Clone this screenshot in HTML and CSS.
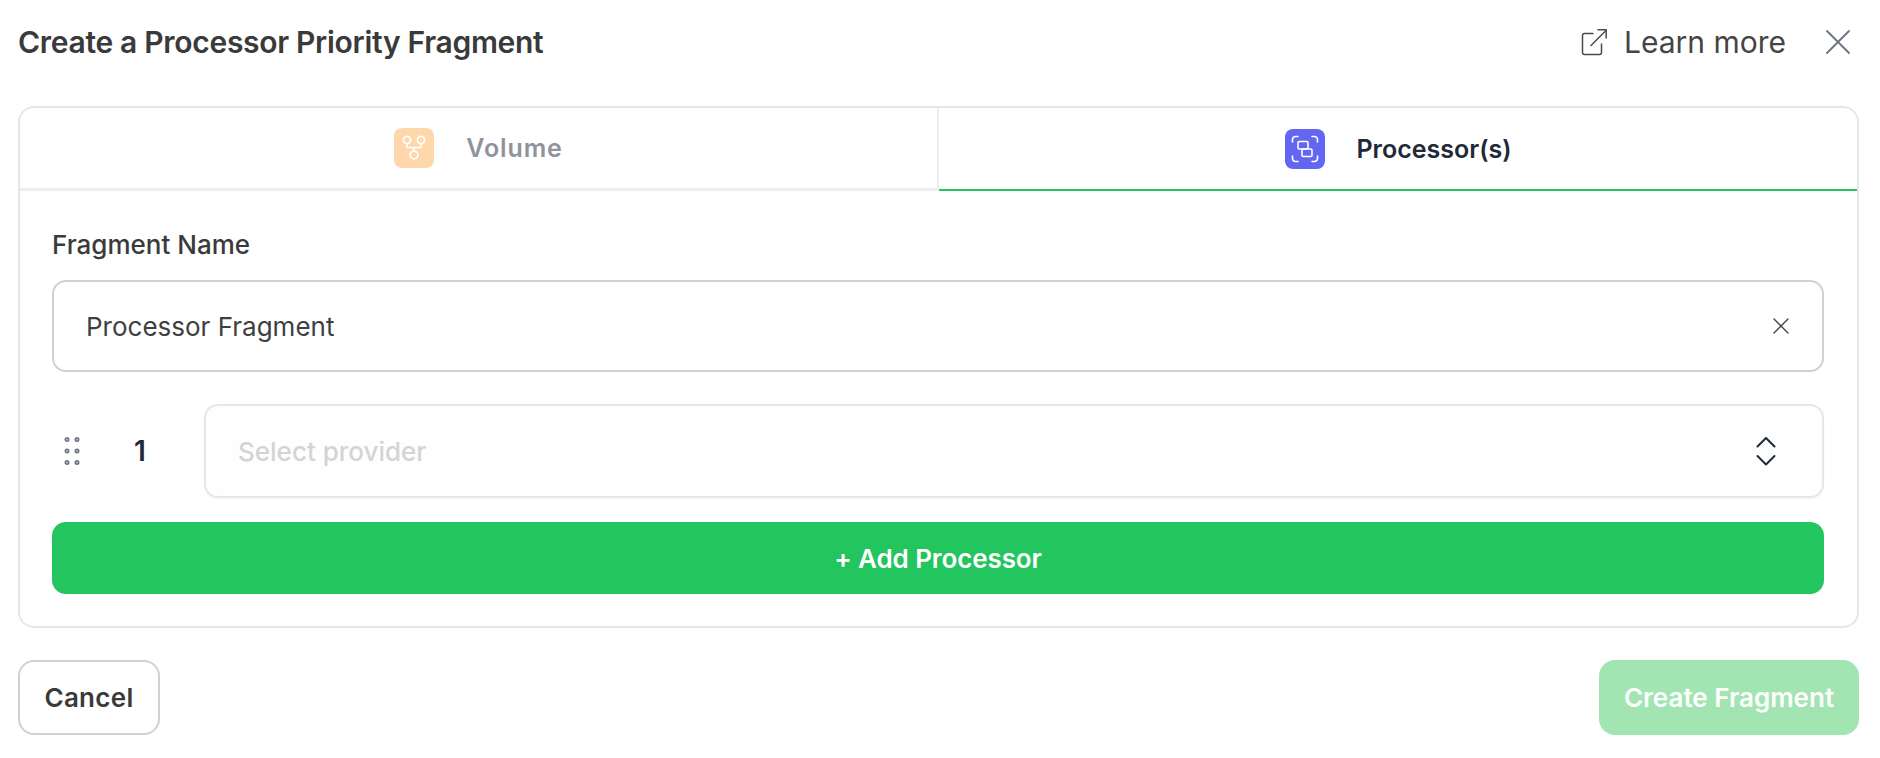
FILE: index.html
```html
<!DOCTYPE html>
<html lang="en">
<head>
<meta charset="utf-8">
<title>Create a Processor Priority Fragment</title>
<link rel="stylesheet" href="styles.css">
</head>
<body>
<div class="modal">
  <header class="head">
    <h1 class="title">Create a Processor Priority Fragment</h1>
    <a class="learn">
      <svg class="ext" width="28" height="28" viewBox="0 0 28 28" fill="none" stroke="#4b4b4b" stroke-width="1.5" stroke-linecap="round" stroke-linejoin="round"><path d="M13 5.5H4.5a2 2 0 0 0-2 2v17a2 2 0 0 0 2 2h15a2 2 0 0 0 2-2V16"/><path d="M11 17.5 26 2.5"/><path d="M18 1.8h8.2V10"/></svg>
      <span>Learn more</span>
    </a>
    <svg class="close" width="26" height="26" viewBox="0 0 26 26" fill="none" stroke="#6b7280" stroke-width="1.8" stroke-linecap="round"><path d="M2 2 24 24M24 2 2 24"/></svg>
  </header>

  <section class="card">
    <div class="tabs">
      <div class="tab tab-off">
        <span class="badge badge-orange">
          <svg width="26" height="28" viewBox="0 0 26 28" fill="none" stroke="#fff" stroke-width="1.7"><circle cx="6" cy="6" r="3.6"/><circle cx="20" cy="6" r="3.6"/><circle cx="13" cy="21" r="3.9"/><path d="M6 9.6V13.5H20V9.6M13 13.5V17.1"/></svg>
        </span>
        <span class="tab-label">Volume</span>
      </div>
      <div class="tab tab-on">
        <span class="badge badge-indigo">
          <svg width="28" height="28" viewBox="0 0 28 28" fill="none" stroke="#fff" stroke-width="1.6" stroke-linecap="round"><path d="M1.5 7V4.5a3 3 0 0 1 3-3H7M21 1.5h2.5a3 3 0 0 1 3 3V7M26.5 21v2.500a3 3 0 0 1-3 3H21M7 26.500H4.500a3 3 0 0 1-3-3V21"/><rect x="7" y="6.500" width="10" height="7.500" rx="1.200"/><rect x="11" y="14" width="10" height="7.500" rx="1.200"/></svg>
        </span>
        <span class="tab-label">Processor(s)</span>
      </div>
    </div>

    <div class="body">
      <label class="field-label">Fragment Name</label>
      <div class="input">
        <span>Processor Fragment</span>
        <svg width="16" height="16" viewBox="0 0 16 16" fill="none" stroke="#3f3f3f" stroke-width="1.3" stroke-linecap="round"><path d="M1 1 15 15M15 1 1 15"/></svg>
      </div>

      <div class="row">
        <svg class="grip" width="16" height="28" viewBox="0 0 16 28" fill="#b4b8c0" stroke="#6b7280" stroke-width="1.4"><circle cx="3" cy="2.500" r="1.800"/><circle cx="13" cy="2.500" r="1.800"/><circle cx="3" cy="14" r="1.800"/><circle cx="13" cy="14" r="1.800"/><circle cx="3" cy="25.500" r="1.800"/><circle cx="13" cy="25.500" r="1.800"/></svg>
        <span class="num">1</span>
        <div class="select">
          <span class="placeholder">Select provider</span>
          <svg width="20" height="30" viewBox="0 0 20 30" fill="none" stroke="#1f2937" stroke-width="2" stroke-linecap="round" stroke-linejoin="round"><path d="M1.500 10.500 10 2l8.500 8.500M1.500 20 10 28.500 18.500 20"/></svg>
        </div>
      </div>

      <button class="add">+ Add Processor</button>
    </div>
  </section>

  <footer class="foot">
    <button class="cancel">Cancel</button>
    <button class="create">Create Fragment</button>
  </footer>
</div>
</body>
</html>
```

FILE: styles.css
```css
* { box-sizing: border-box; }
html, body { margin: 0; background: #fff; }
body {
  font-family: "Inter", "Liberation Sans", sans-serif;
  color: #3a3a3a;
  width: 1880px;
  height: 758px;
  overflow: hidden;
}
.modal { padding: 0 21px 0 18px; }
.head {
  height: 106px;
  display: flex;
  align-items: center;
  padding-bottom: 23px;
}
.title {
  margin: 0;
  flex: 1;
  font-size: 30px;
  font-weight: 600;
  letter-spacing: -0.3px;
  color: #3a3a3a;
}
.learn {
  display: flex;
  align-items: center;
  gap: 16px;
  font-size: 30px;
  color: #454545;
}
.close { margin-left: 39px; margin-right: 8px; }
.card {
  height: 522px;
  border: 2px solid #e6e7eb;
  border-radius: 16px;
  overflow: hidden;
}
.tabs { display: grid; grid-template-columns: 919px 1fr; height: 83px; }
.tab {
  display: flex;
  align-items: center;
  justify-content: center;
  gap: 31px;
  font-size: 25px;
  font-weight: 600;
}
.tab-off {
  color: #8f939c;
  gap: 32px;
  letter-spacing: 0.9px;
  border-bottom: 3px solid #eceef1;
  border-right: 2px solid #eceef1;
}
.tab-on {
  color: #1f2937;
  padding-left: 1px;
  border-bottom: 2px solid #22c55e;
}
.badge {
  width: 40px;
  height: 40px;
  border-radius: 8px;
  display: flex;
  align-items: center;
  justify-content: center;
}
.badge-orange { background: #fed7aa; }
.badge-indigo { background: #6366f1; }
.body { padding: 39px 33px 0 32px; }
.field-label {
  display: block;
  font-size: 26px;
  font-weight: 500;
  line-height: 29px;
  color: #3a3a3a;
}
.input {
  margin-top: 21px;
  height: 92px;
  border: 2px solid #d1d1d1;
  border-radius: 14px;
  display: flex;
  align-items: center;
  justify-content: space-between;
  padding: 0 33px 0 32px;
  font-size: 26px;
  color: #3f3f3f;
}
.row {
  margin-top: 32px;
  display: flex;
  align-items: center;
  height: 94px;
}
.grip { margin-left: 12px; flex: none; }
.num {
  width: 124px;
  padding-left: 54px;
  font-size: 28px;
  font-weight: 600;
  color: #1f2937;
}
.select {
  flex: 1;
  height: 94px;
  border: 2px solid #e6e7eb;
  border-radius: 14px;
  background: #fefefe;
  box-shadow: 0 1px 2px rgba(0, 0, 0, .05);
  display: flex;
  align-items: center;
  justify-content: space-between;
  padding: 0 46px 0 32px;
}
.placeholder { font-size: 26px; font-weight: 500; color: #d4d4d4; }
.add {
  display: block;
  width: 100%;
  margin-top: 24px;
  height: 72px;
  border: 0;
  border-radius: 14px;
  background: #22c55e;
  color: #fff;
  font: 600 26px "Inter", "Liberation Sans", sans-serif;
  letter-spacing: -0.1px;
}
.foot {
  margin-top: 32px;
  display: flex;
  justify-content: space-between;
}
.foot button {
  height: 75px;
  border-radius: 16px;
  font: 600 26px "Inter", "Liberation Sans", sans-serif;
}
.cancel {
  width: 142px;
  background: #fff;
  border: 2px solid #d1d1d1;
  color: #3a3a3a;
  letter-spacing: 0.3px;
}
.create {
  width: 260px;
  border: 0;
  background: #a2e5b3;
  color: #fff;
}
```
